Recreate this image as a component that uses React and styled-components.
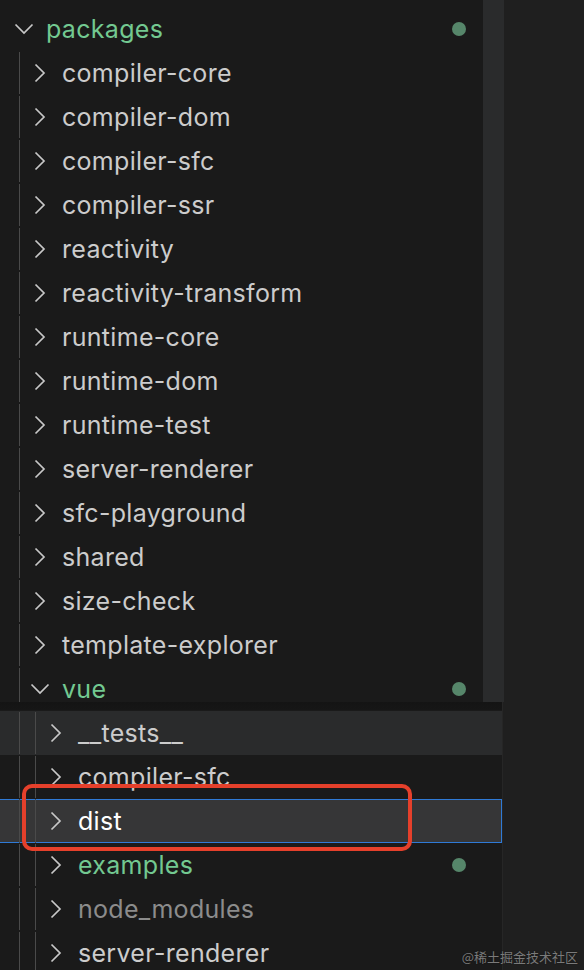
import React from "react";
import styled, { createGlobalStyle } from "styled-components";

const Global = createGlobalStyle`
  html, body { margin: 0; padding: 0; background: #1a1a1a; }
  body { width: 584px; height: 970px; overflow: hidden; font-family: Inter, "Noto Sans", sans-serif; }
`;

const Page = styled.div`
  position: relative;
  display: flex;
  width: 584px;
  height: 970px;
  overflow: hidden;
  background: #1a1a1a;
`;

const Tree = styled.div`
  width: 502px;
  flex: none;
  display: flex;
  flex-direction: column;
  padding-top: 7px;
  background: #1a1a1a;
`;

const SidePanel = styled.div`
  flex: 1;
  background: #1f1f1f;
  border-left: 1px solid #262626;
`;

const Row = styled.div`
  position: relative;
  display: flex;
  align-items: center;
  height: 44px;
  box-sizing: border-box;
  padding-left: 4px;
  padding-right: 35px;
  background: ${(p) => (p.$selected ? "#363637" : p.$hover ? "#2a2b2c" : "transparent")};
  border-top: 1px solid ${(p) => (p.$selected ? "#2f7ad6" : "transparent")};
  border-bottom: 1px solid ${(p) => (p.$selected ? "#2f7ad6" : "transparent")};
  border-right: 1px solid ${(p) => (p.$selected ? "#2f7ad6" : "transparent")};
`;

const Guide = styled.span`
  flex: none;
  align-self: stretch;
  width: 16px;
  box-sizing: border-box;
  border-right: 1px solid #4a4a4a;
  margin-top: ${(p) => (p.$sel ? "-1px" : "0")};
  margin-bottom: ${(p) => (p.$sel ? "-1px" : "0")};
`;

const Twisty = styled.span`
  flex: none;
  width: 40px;
  display: flex;
  align-items: center;
  justify-content: center;
`;

const Label = styled.span`
  flex: 1;
  margin-left: 2px;
  font-size: 25px;
  line-height: 44px;
  letter-spacing: 0.3px;
  white-space: nowrap;
  color: ${(p) => p.$color};
`;

const Dot = styled.span`
  flex: none;
  width: 14px;
  height: 14px;
  border-radius: 50%;
  background: #56866a;
`;

const ScrollThumb = styled.div`
  position: absolute;
  left: 483px;
  top: 0;
  width: 21px;
  height: 702px;
  background: #2a2b2c;
`;

const StickyShadow = styled.div`
  position: absolute;
  left: 0;
  top: 702px;
  width: 502px;
  height: 8px;
  background: linear-gradient(#141414, #161616);
`;

const Annotation = styled.div`
  position: absolute;
  left: 22px;
  top: 784px;
  width: 390px;
  height: 67px;
  box-sizing: border-box;
  border: 4px solid #e5402b;
  border-radius: 10px;
  pointer-events: none;
`;

const Watermark = styled.div`
  position: absolute;
  right: 6px;
  bottom: 4px;
  font-family: "Noto Sans CJK SC", "Noto Sans", sans-serif;
  font-size: 13px;
  color: #7a7a7a;
  text-shadow: 0 0 1px #111;
`;

const Chevron = ({ open }) =>
  open ? (
    <svg width="20" height="12" viewBox="0 0 20 12">
      <path d="M1.5 1.5 L10 10 L18.5 1.5" fill="none" stroke="#c8c8c8" strokeWidth="1.7" strokeLinejoin="miter" />
    </svg>
  ) : (
    <svg width="12" height="20" viewBox="0 0 12 20">
      <path d="M1.5 1.5 L10 10 L1.5 18.5" fill="none" stroke="#c8c8c8" strokeWidth="1.7" strokeLinejoin="miter" />
    </svg>
  );

const GREEN = "#73c991";
const TEXT = "#cccccc";

const items = [
  { name: "packages", depth: 0, open: true, color: GREEN, dot: true },
  ...[
    "compiler-core",
    "compiler-dom",
    "compiler-sfc",
    "compiler-ssr",
    "reactivity",
    "reactivity-transform",
    "runtime-core",
    "runtime-dom",
    "runtime-test",
    "server-renderer",
    "sfc-playground",
    "shared",
    "size-check",
    "template-explorer",
  ].map((name) => ({ name, depth: 1 })),
  { name: "vue", depth: 1, open: true, color: GREEN, dot: true },
  { name: "__tests__", depth: 2, hover: true },
  { name: "compiler-sfc", depth: 2 },
  { name: "dist", depth: 2, selected: true, color: "#ffffff" },
  { name: "examples", depth: 2, color: GREEN, dot: true },
  { name: "node_modules", depth: 2, color: "#8c8c8c" },
  { name: "server-renderer", depth: 2 },
];

export default function App() {
  return (
    <>
      <Global />
      <Page>
        <Tree>
          {items.map((it, i) => (
            <Row key={i} $hover={it.hover} $selected={it.selected}>
              {Array.from({ length: it.depth }).map((_, g) => (
                <Guide key={g} $sel={it.selected} />
              ))}
              <Twisty>
                <Chevron open={it.open} />
              </Twisty>
              <Label $color={it.color || TEXT}>{it.name}</Label>
              {it.dot && <Dot />}
            </Row>
          ))}
        </Tree>
        <SidePanel />
        <ScrollThumb />
        <StickyShadow />
        <Annotation />
        <Watermark>@稀土掘金技术社区</Watermark>
      </Page>
    </>
  );
}
